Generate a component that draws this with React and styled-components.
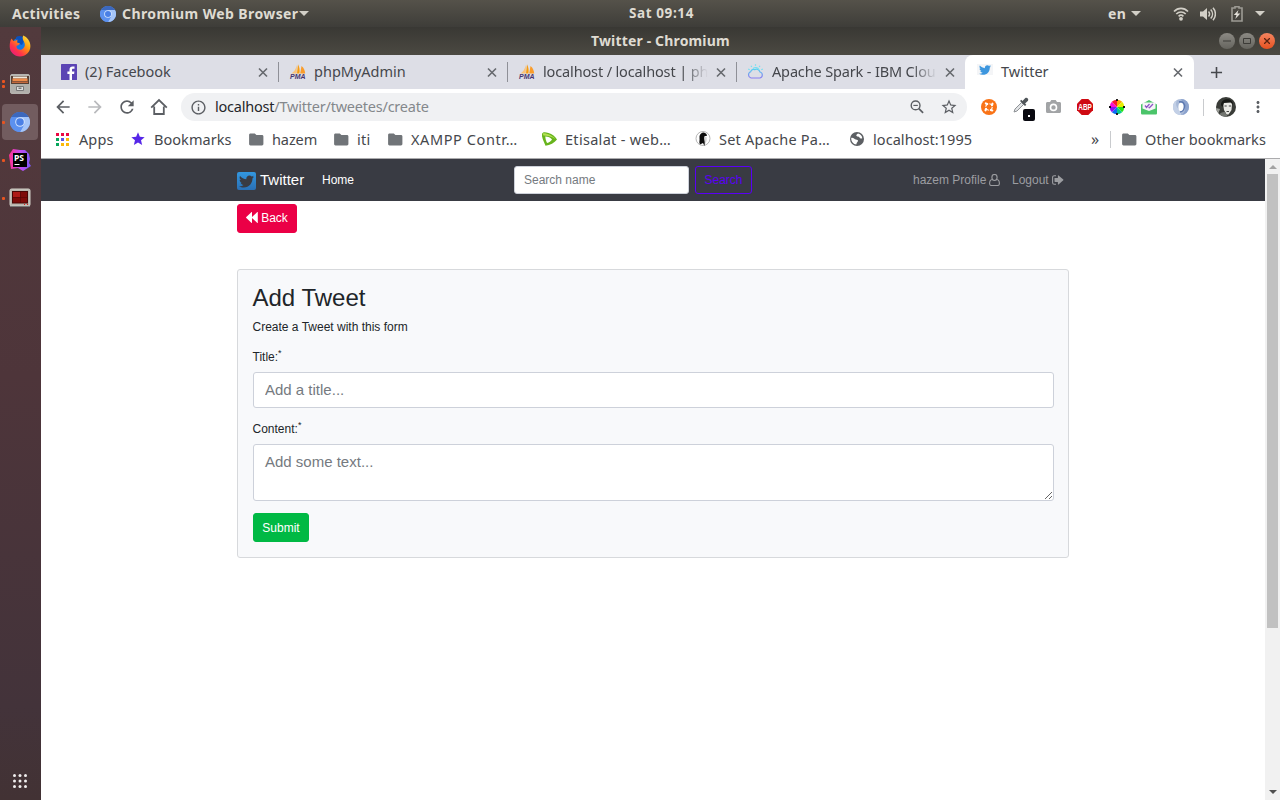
import React from "react";
import styled, { createGlobalStyle } from "styled-components";
import {
  MdArrowBack, MdArrowForward, MdRefresh, MdInfoOutline, MdStarBorder,
  MdMoreVert, MdAdd, MdStar,
} from "react-icons/md";
import { FaTwitter } from "react-icons/fa";

const Global = createGlobalStyle`
  * { box-sizing: border-box; }
  html, body { margin: 0; padding: 0; overflow: hidden; background: #fff; }
`;

const Screen = styled.div`
  display: flex;
  flex-direction: column;
  width: 1280px;
  height: 800px;
  overflow: hidden;
  font-family: "Noto Sans", "Open Sans", sans-serif;
`;

/* ---------- desktop shell ---------- */

const TopBar = styled.header`
  display: flex;
  align-items: center;
  height: 27px;
  flex: none;
  background: linear-gradient(#55524a, #3e3d39);
  color: #dfdbd2;
`;

const Label = styled.span`
  flex: none;
  width: ${(p) => (p.$w ? p.$w + "px" : "auto")};
  margin-left: ${(p) => p.$ml || 0}px;
  padding-bottom: ${(p) => p.$lift || 0}px;
  font-size: ${(p) => p.$size || 14.5}px;
  font-weight: ${(p) => (p.$bold ? 700 : 400)};
  letter-spacing: ${(p) => p.$ls || 0}px;
  line-height: 20px;
  white-space: nowrap;
`;

const Slot = styled.span`
  display: flex;
  flex: none;
  align-items: center;
  justify-content: center;
  width: ${(p) => p.$w}px;
  height: ${(p) => p.$h || p.$w}px;
  margin-left: ${(p) => p.$ml || 0}px;
  color: ${(p) => p.$color || "inherit"};
  svg { display: block; flex: none; }
`;

const Desktop = styled.div`
  display: flex;
  flex: 1;
  min-height: 0;
`;

const Dock = styled.nav`
  display: flex;
  flex-direction: column;
  width: 41px;
  flex: none;
  background: linear-gradient(#523a3d, #4e353a 45%, #43333a 88%, #423234);
`;

const DockItem = styled.div`
  display: flex;
  align-items: center;
  width: 40px;
  height: 38px;
`;

const Dots = styled.div`
  display: flex;
  flex-direction: column;
  gap: 2px;
  width: 5px;
  margin-right: -5px;
  padding-left: 2px;
  z-index: 1;
  i { width: 3px; height: 3px; border-radius: 1px; background: #e95420; flex: none; }
`;

const DockTile = styled.div`
  display: flex;
  align-items: center;
  justify-content: center;
  width: 36px;
  height: 36px;
  margin-left: 2px;
  border-radius: 4px;
  background: ${(p) => (p.$active ? "#725c5f" : "transparent")};
`;

const AppsButton = styled.div`
  margin: auto 0 10px 12px;
  height: 16px;
  svg { display: block; }
`;

const Window = styled.main`
  display: flex;
  flex-direction: column;
  width: 1239px;
`;

const TitleBar = styled.div`
  display: flex;
  align-items: center;
  height: 28px;
  flex: none;
  background: linear-gradient(#393834, #4b4942);
  color: #dfdbd2;
`;

const WindowButton = styled.span`
  display: flex;
  align-items: center;
  justify-content: center;
  width: 16px;
  height: 16px;
  margin-left: ${(p) => p.$ml}px;
  border-radius: 50%;
  background: ${(p) => (p.$close ? "linear-gradient(#f58560, #e65120)" : "linear-gradient(#8c8a84, #65645e)")};
`;

/* ---------- browser chrome ---------- */

const TabStrip = styled.div`
  display: flex;
  height: 34px;
  flex: none;
  background: #dddee6;
  color: #45474c;
`;

const Tab = styled.div`
  display: flex;
  align-items: center;
  width: ${(p) => p.$w}px;
  padding-left: ${(p) => p.$pl}px;
  flex: none;
  background: ${(p) => (p.$active ? "#fff" : "transparent")};
  border-radius: ${(p) => (p.$active ? "8px 8px 0 0" : 0)};
`;

const TabTitle = styled(Label)`
  margin-left: 8px;
  padding-bottom: 2px;
  ${(p) => p.$fade && "mask-image: linear-gradient(90deg, #000 85%, transparent);"}
`;

const TabDivider = styled.i`
  width: 1px;
  height: 20px;
  margin-top: 7px;
  background: #8f9097;
`;

const Toolbar = styled.div`
  display: flex;
  align-items: center;
  height: 36px;
  flex: none;
  color: #5b5e63;
  padding-left: 12px;
`;

const AddressBar = styled.div`
  display: flex;
  align-items: center;
  width: 786px;
  height: 28px;
  margin-left: 12px;
  border-radius: 14px;
  background: #f0f1f3;
  em { font-style: normal; color: #84888c; }
  b { font-weight: 400; color: #25262a; }
`;

const BookmarksBar = styled.div`
  display: flex;
  align-items: center;
  height: 34px;
  flex: none;
  border-bottom: 1px solid #ababad;
  color: #45474c;
  padding-bottom: 5px;
`;

const Rule = styled.i`
  flex: none;
  width: 1px;
  height: 17px;
  margin-left: ${(p) => p.$ml}px;
  background: #c9cbce;
`;

const Badge = styled.span`
  position: relative;
  display: flex;
  margin-left: 16px;
  width: 20px;
  height: 20px;
  > svg + svg { position: absolute; left: 10px; top: 12px; }
`;

/* ---------- page ---------- */

const Viewport = styled.div`
  display: flex;
  flex: 1;
  min-height: 0;
`;

const Page = styled.div`
  width: 1224px;
  background: #fff;
  color: #212529;
  font: 12px/18px "Liberation Sans", Arial, sans-serif;
`;

const Nav = styled.div`
  display: flex;
  align-items: center;
  height: 42px;
  padding-left: 196px;
  background: #393b43;
  color: #fff;
`;

const Brand = styled.span`
  display: flex;
  align-items: center;
  gap: 4px;
  width: 85px;
  font-size: 15px;
`;

const BrandLogo = styled.i`
  display: flex;
  align-items: center;
  justify-content: center;
  width: 19px;
  height: 18px;
  margin-top: 2px;
  border-radius: 2px;
  background: linear-gradient(#3397df, #2a70b6);
  color: #393b43;
`;

const NavLink = styled.span`
  display: flex;
  align-items: center;
  gap: 3px;
  width: ${(p) => p.$w}px;
  color: ${(p) => (p.$active ? "#fff" : "#9c9da1")};
  white-space: nowrap;
`;

const Field = styled.input`
  display: block;
  width: 100%;
  height: 36px;
  padding: 0 11px 2px;
  border: 1px solid #cdd1da;
  border-radius: 3px;
  outline: none;
  background: #fff;
  font: 15px/22px "Liberation Sans", Arial, sans-serif;
  &::placeholder { color: #757a80; opacity: 1; }
`;

const SearchField = styled(Field)`
  width: 175px;
  height: 28px;
  padding: 0 9px;
  font-size: 12px;
`;

const TextArea = styled(Field)`
  height: 57px;
  padding: 6px 11px;
  resize: vertical;
`;

const Button = styled.button`
  display: flex;
  align-items: center;
  justify-content: center;
  gap: 3px;
  width: ${(p) => p.$w}px;
  height: 29px;
  padding: 0 0 ${(p) => p.$lift || 0}px;
  border: 1px solid ${(p) => p.$line || p.$bg};
  border-radius: 3px;
  background: ${(p) => p.$bg};
  color: ${(p) => p.$line || "#fff"};
  font: 12px/18px "Liberation Sans", Arial, sans-serif;
`;

const SearchButton = styled(Button)`
  height: 28px;
  margin: 0 161px 0 6px;
`;

const Content = styled.div`
  width: 832px;
  margin: 3px 0 0 196px;
`;

const Card = styled.form`
  height: 289px;
  margin-top: 36px;
  padding: 13px 14px 0 15px;
  border: 1px solid #d7d9dc;
  border-radius: 3px;
  background: #f8f9fb;
`;

const Heading = styled.h3`
  margin: 0 0 6px -0.5px;
  font-size: 24px;
  line-height: 29px;
  font-weight: 400;
`;

const Intro = styled.p`
  margin: 0 0 12px -0.5px;
`;

const FieldLabel = styled.label`
  display: block;
  height: 18px;
  margin: 0 0 6px -0.5px;
  sup { font-size: 9px; line-height: 0; vertical-align: 5px; }
`;

const Group = styled.div`
  margin-bottom: 12px;
`;

const Scrollbar = styled.div`
  display: flex;
  flex-direction: column;
  align-items: center;
  width: 15px;
  background: #f1f1f1;
`;

const Thumb = styled.i`
  width: 11px;
  height: 454px;
  background: #c1c1c1;
`;

const Arrow = styled.i`
  width: 0;
  height: 0;
  border: 4px solid transparent;
  ${(p) =>
    p.$down
      ? "border-top-color: #505050; border-bottom: 0; margin: auto 0 6px;"
      : "border-bottom-color: #a3a3a3; border-top: 0; margin: 6px 0 5px;"}
`;

/* ---------- icons ---------- */

const Caret = () => (
  <svg width="10" height="5" viewBox="0 0 10 5"><path d="M0 0h10L5 5z" fill="#d2cfc7" /></svg>
);

const Close = () => (
  <svg width="15" height="15" viewBox="0 0 15 15"><path d="m4 3.500 8 8M12 3.500l-8 8" stroke="#66696e" strokeWidth="1.600" /></svg>
);

const Folder = () => (
  <svg width="15" height="13" viewBox="0 0 15 13">
    <path d="M1.500.5h4.300l1.600 1.600H13c.8 0 1.400.6 1.400 1.400v7.600c0 .8-.6 1.400-1.400 1.400H1.500C.7 12.500.1 11.900.1 11.100V1.900C.1 1.100.7.5 1.500.5z" fill="#707478" />
  </svg>
);

const ZoomOut = () => (
  <svg width="14" height="14" viewBox="0 0 15 15" fill="none" stroke="#5b5e63">
    <circle cx="6" cy="5.800" r="4.700" strokeWidth="1.500" />
    <path d="M9.500 9.300 14 13.800" strokeWidth="1.800" /><path d="M3.600 5.800h4.800" strokeWidth="1.200" />
  </svg>
);

const Globe = () => (
  <svg width="14" height="14" viewBox="0 0 14 14">
    <circle cx="7" cy="7" r="7" fill="#5c5f63" />
    <path d="M1.200 6C3 5.500 4 6.500 5 7.200s2.600.2 3 1.400-1.500 1.600-1.700 3.900C3.500 12.300 1 9.500 1.200 6zM8 1.500C6.500 2.500 5.500 3.500 7 4.300s2 .2 2.500 1.300 1.500 1 2.800.6C12 3.500 10 1.700 8 1.500z" fill="#fff" />
  </svg>
);

const Chromium = ({ size }) => (
  <svg width={size} height={size} viewBox="0 0 20 20">
    <circle cx="10" cy="10" r="10" fill="#5a90ee" />
    <path d="M1.300 5A10 10 0 0 1 18.700 5H10z" fill="#3c68bd" />
    <path d="M18.700 5A10 10 0 0 1 10 20l4.400-8L10 5z" fill="#a5c5f8" />
    <path d="M1.300 5A10 10 0 0 0 10 20l3.500-6-8-2z" fill="#5c91ef" />
    <circle cx="10" cy="10" r="4.800" fill="#d3e3fc" />
    <circle cx="10" cy="10" r="3.800" fill="#4a80e6" />
  </svg>
);

const Firefox = () => (
  <svg width="22" height="22" viewBox="0 0 22 22">
    <defs>
      <linearGradient id="ff" x1="1" y1="0" x2="0.1" y2="1">
        <stop offset="0" stopColor="#fff44f" /><stop offset="0.4" stopColor="#ff980e" />
        <stop offset="0.7" stopColor="#ff3647" /><stop offset="1" stopColor="#e31587" />
      </linearGradient>
    </defs>
    <circle cx="11" cy="10.500" r="8" fill="#1476e6" />
    <path d="M7 2c3-2 7-1 9 2l-3 6-5-2z" fill="#0a50bd" />
    <path d="M2.500 3.500 4.400 6 7 5.400l1.500-1-.4 3 3 1.200-1.800 1.600-1.700.6c-.8 4 4.500 5 6.500 2.600 2-2 2.200-4 1-6.500C14 5 13 3 14.200.5 18 2 21.500 6 21.400 11c0 6-4.800 10.500-10.400 10.500S.7 17 .7 11.500c0-3 .4-6 1.800-8z" fill="url(#ff)" />
  </svg>
);

const Files = () => (
  <svg width="20" height="20" viewBox="0 0 20 20">
    <rect x=".5" y=".5" width="19" height="19" rx="1.500" fill="#b7b5b0" stroke="#b5b4b0" />
    <rect x="1" y="2" width="18" height="8" fill="#574034" />
    <path d="M3 2.500h14v2H3z" fill="#eee8dc" /><path d="M2.500 4.500h15v2.500h-15z" fill="#ee8c4b" /><path d="M2 7.500h16v1.500H2z" fill="#c2683e" />
    <path d="M1 10h18v8.500H1z" fill="#b0afab" />
    <path d="M6.500 12.500h7v4h-7z" fill="#ddd" stroke="#777" /><path d="M8.500 13.500h3V15h-3z" fill="#777" />
  </svg>
);

const PhpStorm = () => (
  <svg width="22" height="22" viewBox="0 0 22 22">
    <defs><linearGradient id="ps"><stop offset="0" stopColor="#ff318c" /><stop offset=".5" stopColor="#c64bf5" /><stop offset="1" stopColor="#765af8" /></linearGradient></defs>
    <path d="M0 6 4 0l7 1 5 0 4 4 1 5-1 4 2 3-8 5-5-3-7 1z" fill="url(#ps)" />
    <path d="M4 4h14v14H4z" fill="#000" />
    <text x="5" y="12" fontFamily="Noto Sans" fontWeight="700" fontSize="8.500" fill="#fff">PS</text>
    <path d="M5.500 15h5v1h-5z" fill="#fff" />
  </svg>
);

const Terminator = () => (
  <svg width="22" height="20" viewBox="0 0 22 20">
    <rect x="1" y="1" width="20" height="17" rx="1.500" fill="#b8b6ae" stroke="#d2d0c8" />
    <path d="M3 3h16v12.500H3z" fill="#4a0705" /><path d="M4 4h7v5H4z" fill="#ae1b17" /><path d="M11.500 4h6.500v5h-6.500zM4 9.500h7v5H4zM11.500 9.500h6.500v5h-6.500z" fill="#7e0b09" />
    <path d="M15 16.500h1M18 16.500h1" stroke="#d22" /><path d="M1 18.500h20" stroke="#777" />
  </svg>
);

const AppGrid = () => (
  <svg width="16" height="16" viewBox="0 0 16 16" fill="#f0eeee">
    {[1.5, 7, 12.5].map((y) => [2.5, 8, 13.5].map((x) => <circle key={x + "-" + y} cx={x} cy={y} r="1.500" />))}
  </svg>
);

const Wifi = () => (
  <svg width="16" height="14" viewBox="0 0 16 14" fill="none" stroke="#d2cfc7" strokeWidth="1.700">
    <path d="M1 4.500C5 .3 11 .3 15 4.500M3.300 7c2.700-2.700 6.700-2.700 9.400 0M5.600 9.300c1.400-1.300 3.400-1.300 4.800 0" />
    <circle cx="8" cy="11.800" r="1.900" fill="#d2cfc7" stroke="none" />
  </svg>
);

const Volume = () => (
  <svg width="16" height="14" viewBox="0 0 16 14" fill="none" stroke="#d2cfc7" strokeWidth="1.500">
    <path d="M0 4.500h3L7 1v12L3 9.500H0z" fill="#d2cfc7" stroke="none" />
    <path d="M8.500 4.500c1.300 1.500 1.300 3.500 0 5M10.700 2.500c2.400 2.600 2.400 6.400 0 9M13 .7c3.200 3.600 3.200 9 0 12.600" />
  </svg>
);

const Battery = () => (
  <svg width="12" height="16" viewBox="0 0 12 16">
    <path d="M4 2V.8h4V2h3v13H1V2z" fill="none" stroke="#9d9b94" strokeWidth="1.600" />
    <path d="M7.500 4 2.800 9h2.700L4.300 13l5-5.500H6.400z" fill="#e4e1da" />
  </svg>
);

const Facebook = () => (
  <svg width="16" height="16" viewBox="0 0 16 16">
    <rect width="16" height="16" rx=".6" fill="#5b44b4" />
    <path d="M11 16V9.900h2.100l.3-2.400H11V6c0-.7.200-1.200 1.200-1.200h1.300V2.600c-.3 0-1-.1-1.900-.1-1.900 0-3.100 1.100-3.100 3.200v1.800H6.400v2.400h2.100V16z" fill="#fff" />
  </svg>
);

const Pma = () => (
  <svg width="16" height="16" viewBox="0 0 16 16" overflow="visible">
    <path d="M6.800 1v8.500H1.500C4 8 6 5 6.800 1z" fill="#fbc37a" />
    <path d="M8 .3c1.500 3 2 6 1.400 9.200H7z" fill="#f89c0e" />
    <path d="M11.500 2c2.500 2 3.500 4.700 3.700 7.500h-5z" fill="#fa9c2a" />
    <text x="0" y="15.200" textLength="15.500" lengthAdjust="spacingAndGlyphs" fontSize="6.500" fontWeight="700" fontStyle="italic" fontFamily="Liberation Sans" fill="#47356f">PMA</text>
  </svg>
);

const CloudSun = () => (
  <svg width="17" height="16" viewBox="0 0 17 16" fill="none" strokeWidth="1.200">
    <defs><linearGradient id="cs" x2="0" y2="1"><stop offset="0" stopColor="#5bd0ef" /><stop offset="1" stopColor="#8a7bf0" /></linearGradient></defs>
    <path d="M4 14a3.300 3.300 0 0 1-.3-6.300c.6-2.200 2.300-2.700 4-2.100C9.300 4.800 12 5 13 8a3.100 3.100 0 0 1 0 6z" stroke="url(#cs)" />
    <path d="M6 4.700a3.600 3.600 0 0 1 6 1M8.500.3v1.500M4 1.700l.8 1.300M13 1.700l-.8 1.300M1.200 5l1.500.7M15.800 5l-1.500.7" stroke="#74dff2" />
  </svg>
);

const Home = () => (
  <svg width="18" height="18" viewBox="0 0 18 18" fill="none" stroke="#5b5e63" strokeWidth="1.800">
    <path d="M1.200 9.700 9 2l7.800 7.700M4.200 8.500V16h9.600V8.500" />
  </svg>
);

const AppsIcon = () => {
  const colors = ["#eb0843", "#eb0843", "#eb0843", "#06a55b", "#5a55e6", "#fbb90a", "#06a55b", "#fbb90a", "#fbb90a"];
  return (
    <svg width="13" height="13" viewBox="0 0 13 13">
      {colors.map((c, i) => <rect key={i} x={(i % 3) * 5} y={Math.floor(i / 3) * 5} width="3" height="3" fill={c} />)}
    </svg>
  );
};

const Etisalat = () => (
  <svg width="17" height="16" viewBox="0 0 17 16">
    <path d="M1 3C1.500.8 4 .8 7.500 2S14.500 5.500 16 8.500c-2.500 3.500-7 5.500-11.500 6.300C2.500 10 .5 6 1 3z" fill="#67b41d" />
    <path d="M1.500 2.500C4 1.500 11 4 14.500 8 10 5 6 4.500 2.500 4.500z" fill="#b3e052" />
    <path d="M4.300 5.500c3 0 5.200 1 6.700 3-1.300 2-2.700 3-4.900 3.600C5 9.800 4.300 7.500 4.300 5.500z" fill="#fff" />
  </svg>
);

const Penguin = () => (
  <svg width="16" height="16" viewBox="0 0 16 16">
    <circle cx="8" cy="7.500" r="7" fill="#fff" stroke="#a3a3a3" strokeWidth=".8" />
    <path d="M4.500 5C5.500 2 8 .8 10.500 2.200c1.500 1 1.800 2.600 1 2.900L9.800 5c-1.500 2 .7 5-.3 10L8 12l-3 1.500C3.500 11 5 9 4.500 7.500z" fill="#0d0d0d" />
    <path d="M9.800 5.500 11.500 6c.5 2 .2 4-.8 6L10 14c.7-3-.9-6-.2-8.500z" fill="#d5d5d5" />
  </svg>
);

const Share = () => (
  <svg width="16" height="16" viewBox="0 0 16 16">
    <circle cx="8" cy="8" r="8" fill="#f97317" />
    <g fill="none" stroke="#fff" strokeWidth="2.100" strokeLinecap="round">
      <path d="m4.800 4.400 1.500.5M11.500 4.700l-.5 1.500M11.300 11.500l-1.500-.5M4.500 11.300l.5-1.500" />
    </g>
    <circle cx="8" cy="8" r="3.300" fill="none" stroke="#fff" strokeWidth="1.100" strokeDasharray="3.700 1.500" />
  </svg>
);

const Dropper = () => (
  <Badge>
    <svg width="16" height="16" viewBox="0 0 16 16">
      <path d="m1 15 1-3 6.500-6.500 2 2L4 14z" fill="#e2e4e6" stroke="#8e9296" />
      <path d="m7 4 5 5 1.300-1.300-1.200-1.200L15 3.700C16 2 14 0 12.300 1L9.500 3.900 8.300 2.700z" fill="#50565a" />
    </svg>
    <svg width="12" height="12" viewBox="0 0 12 12"><rect width="12" height="12" rx="2" fill="#090910" /><path d="M5 6h2v2H5z" fill="#fff" /></svg>
  </Badge>
);

const Camera = () => (
  <svg width="15" height="14" viewBox="0 0 15 14">
    <path d="M1.500 2H4l1.300-2h4.400L11 2h2.500c.9 0 1.500.7 1.500 1.500v8c0 .9-.6 1.500-1.500 1.500h-12A1.500 1.500 0 0 1 0 11.500v-8C0 2.700.6 2 1.500 2z" fill="#a2a4a6" />
    <circle cx="7.500" cy="7.400" r="3" fill="none" stroke="#fff" strokeWidth="1.600" />
  </svg>
);

const Abp = () => (
  <svg width="16" height="16" viewBox="0 0 16 16" overflow="visible">
    <path d="M4.700 0h6.600L16 4.700v6.600L11.300 16H4.700L0 11.300V4.700z" fill="#cf0a12" />
    <text x="1.300" y="10.900" textLength="13.500" lengthAdjust="spacingAndGlyphs" fontFamily="Liberation Sans" fontWeight="700" fontSize="8.300" fill="#fff">ABP</text>
  </svg>
);

const Wheel = () => {
  const cs = ["#ffa600", "#e6ef00", "#24e412", "#0ac98c", "#0d6df2", "#8810f2", "#f90fd0", "#fb1530"];
  const pt = (a) => `${8 + 7.3 * Math.cos(a)} ${8 + 7.3 * Math.sin(a)}`;
  return (
    <svg width="16" height="16" viewBox="0 0 16 16">
      {cs.map((c, i) => <path key={c} fill={c} d={`M8 8L${pt((i * Math.PI) / 4 - 1.57)}A7.3 7.3 0 0 1 ${pt(((i + 1) * Math.PI) / 4 - 1.57)}z`} />)}
      <path d="M8 0v2M8 14v2M0 8h2M14 8h2" stroke="#111" strokeWidth="1.800" />
    </svg>
  );
};

const Mail = () => (
  <svg width="16" height="15" viewBox="0 0 16 15">
    <path d="M0 4.500 8 0l8 4.500V13c0 1-.5 1.500-1.500 1.500h-13C.5 14.500 0 14 0 13z" fill="#4bc46a" />
    <path d="M1.500 2.500h13v6L8 11 1.500 8.500z" fill="#f5f5f7" />
    <path d="m4 5.500 1.500 2L8.500 4M7.500 7.300l1 .5L12 4" fill="none" stroke="#8e56c7" strokeWidth="1.300" />
  </svg>
);

const Swirl = () => (
  <svg width="16" height="16" viewBox="0 0 16 16">
    <circle cx="8" cy="8" r="8" fill="#a9bad8" />
    <path d="M8 0a8 8 0 0 1 0 16c4-2 5-6 3-10z" fill="#8ba2cd" />
    <path d="M8 16A8 8 0 0 1 4 1c-2 4-1 8 4 11z" fill="#c3d0e6" />
    <ellipse cx="8" cy="8" rx="2.600" ry="4.300" fill="#fff" />
    <path d="M6 3c4-1 6 2 5.500 5S9 12.800 7 13" fill="none" stroke="#5d79b0" strokeWidth="1.400" />
  </svg>
);

const Avatar = () => (
  <svg width="20" height="20" viewBox="0 0 20 20">
    <defs><clipPath id="av"><circle cx="10" cy="10" r="10" /></clipPath></defs>
    <g clipPath="url(#av)">
      <path d="M0 0h20v20H0z" fill="#3a3c38" />
      <path d="M7 6c1-2 8-2 9 1l-.500 6-3 4.500h-2L8 13z" fill="#e9e9e4" />
      <path d="M5 8c0-7 12-8 12 0l-2-2.500L8 6l-1.500 4z" fill="#171916" />
      <path d="M8.500 9h2.200M12.800 9H15M10.500 14.500h2.500" stroke="#444" strokeWidth="1.100" />
      <path d="M2 20c1-4 4-5 7-5l3 5z" fill="#737671" /><path d="m0 11 4 1-2 5z" fill="#9a9d97" />
    </g>
  </svg>
);

const Backward = () => (
  <svg width="12" height="11" viewBox="0 0 12 11"><path d="M6 .2v4.900L11.300.1c.3-.2.500-.1.500.2v10.400c0 .3-.2.400-.5.200L6 5.900v4.900c0 .3-.2.400-.4.200L.3 5.900a.5.500 0 0 1 0-.8L5.600 0c.2-.2.4-.1.4.2z" fill="#fff" /></svg>
);

const UserO = () => (
  <svg width="11" height="12" viewBox="0 0 11 12" fill="none" stroke="currentColor" strokeWidth="1.100">
    <ellipse cx="5.500" cy="3.500" rx="2.600" ry="3" />
    <path d="M3.200 5.500C1.400 5.700.6 7.500.6 9.400c0 1.300.8 2.100 1.800 2.100h6.200c1 0 1.800-.8 1.800-2.100 0-1.900-.8-3.700-2.600-3.900" />
  </svg>
);

const SignOut = () => (
  <svg width="12" height="10" viewBox="0 0 12 10">
    <path d="M4 .7H2.200C1.300.7.600 1.300.600 2.200v5.600c0 .9.700 1.500 1.600 1.500H4" fill="none" stroke="currentColor" strokeWidth="1.100" />
    <path d="M6.500.4 11.300 4.600c.2.200.2.500 0 .7L6.500 9.600c-.3.200-.6.100-.6-.3V7H3c-.3 0-.5-.2-.5-.4V3.400c0-.2.200-.4.500-.4h2.900V.7c0-.4.300-.5.600-.3z" fill="currentColor" />
  </svg>
);

const Favicon = styled.span`
  display: flex;
  justify-content: center;
  width: 16px;
  height: 11px;
  margin-bottom: 5px;
  background: #f4f5f7;
  color: #3c96de;
  svg { flex: none; }
`;

export default function App() {
  return (
    <Screen>
      <Global />
      <TopBar>
        <Label $ml={12} $w={88} $size={14} $bold $ls={0.33}>Activities</Label>
        <Slot $w={16}><Chromium size={16} /></Slot>
        <Label $ml={6} $w={177} $size={14} $bold $ls={0.4}>Chromium Web Browser</Label>
        <Slot $w={10}><Caret /></Slot>
        <Label $ml={320} $w={479} $size={13.5} $bold $ls={0.6} $lift={2}>Sat 09:14</Label>
        <Label $w={23} $size={14} $bold $ls={0.3}>en</Label>
        <Slot $w={10}><Caret /></Slot>
        <Slot $w={16} $ml={32}><Wifi /></Slot>
        <Slot $w={16} $ml={11}><Volume /></Slot>
        <Slot $w={12} $h={16} $ml={15}><Battery /></Slot>
        <Slot $w={10} $ml={12}><Caret /></Slot>
      </TopBar>
      <Desktop>
        <Dock>
          <DockItem><Dots /><DockTile><Firefox /></DockTile></DockItem>
          <DockItem><Dots><i /><i /></Dots><DockTile><Files /></DockTile></DockItem>
          <DockItem><Dots><i /></Dots><DockTile $active><Chromium size={20} /></DockTile></DockItem>
          <DockItem><Dots><i /></Dots><DockTile><PhpStorm /></DockTile></DockItem>
          <DockItem><Dots><i /></Dots><DockTile><Terminator /></DockTile></DockItem>
          <AppsButton><AppGrid /></AppsButton>
        </Dock>
        <Window>
          <TitleBar>
            <Label $ml={550} $w={628} $size={14} $bold $ls={0.16}>Twitter - Chromium</Label>
            <WindowButton $ml={0}><svg width="8" height="8"><path d="M0 4h8" stroke="#3c3b37" /></svg></WindowButton>
            <WindowButton $ml={4}><svg width="8" height="6"><path d="M.5.500h7v5h-7z" fill="none" stroke="#3c3b37" /></svg></WindowButton>
            <WindowButton $ml={4} $close><svg width="6" height="6"><path d="m0 0 6 6M6 0 0 6" stroke="#5b2310" strokeWidth="1.300" /></svg></WindowButton>
          </TitleBar>
          <TabStrip>
            <Tab $w={237} $pl={20}><Facebook /><TabTitle $w={170}>(2) Facebook</TabTitle><Close /></Tab>
            <TabDivider />
            <Tab $w={228} $pl={11}><Pma /><TabTitle $w={170}>phpMyAdmin</TabTitle><Close /></Tab>
            <TabDivider />
            <Tab $w={228} $pl={11}><Pma /><TabTitle $w={165} $ls={-0.14} $fade>localhost / localhost | ph</TabTitle><Slot $w={15} $ml={5}><Close /></Slot></Tab>
            <TabDivider />
            <Tab $w={228} $pl={10}><CloudSun /><TabTitle $w={165} $ls={-0.15} $fade>Apache Spark - IBM Clou</TabTitle><Slot $w={15} $ml={5}><Close /></Slot></Tab>
            <Tab $w={229} $pl={12} $active><Favicon><FaTwitter size={12} /></Favicon><TabTitle $w={169}>Twitter</TabTitle><Close /></Tab>
            <Slot $w={20} $h={34} $ml={12}><MdAdd size={19} /></Slot>
          </TabStrip>
          <Toolbar>
            <Slot $w={20}><MdArrowBack size={20} /></Slot>
            <Slot $w={20} $ml={12} $color="#b9babd"><MdArrowForward size={20} /></Slot>
            <Slot $w={20} $ml={12}><MdRefresh size={20} /></Slot>
            <Slot $w={20} $ml={12}><Home /></Slot>
            <AddressBar>
              <Slot $w={17} $ml={9}><MdInfoOutline size={17} /></Slot>
              <Label $ml={8} $w={694} $ls={-0.22} $lift={2}><b>localhost</b><em>/Twitter/tweetes/create</em></Label>
              <Slot $w={16}><ZoomOut /></Slot>
              <Slot $w={18} $ml={15}><MdStarBorder size={18} /></Slot>
            </AddressBar>
            <Slot $w={16} $ml={14}><Share /></Slot>
            <Dropper />
            <Slot $w={16} $ml={12}><Camera /></Slot>
            <Slot $w={16} $ml={16}><Abp /></Slot>
            <Slot $w={16} $ml={16}><Wheel /></Slot>
            <Slot $w={16} $ml={16}><Mail /></Slot>
            <Slot $w={16} $ml={16}><Swirl /></Slot>
            <Rule $ml={14} />
            <Slot $w={20} $ml={12}><Avatar /></Slot>
            <Slot $w={18} $ml={13}><MdMoreVert size={18} /></Slot>
          </Toolbar>
          <BookmarksBar>
            <Slot $w={13} $ml={15}><AppsIcon /></Slot>
            <Label $ml={10} $w={51} $ls={0.1}>Apps</Label>
            <Slot $w={15} $color="#5627e8"><MdStar size={16} /></Slot>
            <Label $ml={9} $w={94} $ls={0.05}>Bookmarks</Label>
            <Slot $w={17}><Folder /></Slot>
            <Label $ml={7} $w={61} $ls={-0.1}>hazem</Label>
            <Slot $w={17}><Folder /></Slot>
            <Label $ml={7} $w={30} $ls={0.3}>iti</Label>
            <Slot $w={17}><Folder /></Slot>
            <Label $ml={7} $w={130} $ls={0.6}>XAMPP Contr…</Label>
            <Slot $w={17}><Etisalat /></Slot>
            <Label $ml={7} $w={130} $ls={0.3}>Etisalat - web…</Label>
            <Slot $w={16}><Penguin /></Slot>
            <Label $ml={8} $w={130} $ls={0.23}>Set Apache Pa…</Label>
            <Slot $w={16}><Globe /></Slot>
            <Label $ml={8} $w={218} $ls={0.06}>localhost:1995</Label>
            <Label $w={14} $size={16}>»</Label>
            <Rule $ml={5} />
            <Slot $w={17} $ml={10}><Folder /></Slot>
            <Label $ml={7} $ls={0.06}>Other bookmarks</Label>
          </BookmarksBar>
          <Viewport>
            <Page>
              <Nav>
                <Brand><BrandLogo><FaTwitter size={15} /></BrandLogo>Twitter</Brand>
                <NavLink $w={192} $active>Home</NavLink>
                <SearchField placeholder="Search name" />
                <SearchButton $w={57} $bg="transparent" $line="#5a00f5">Search</SearchButton>
                <NavLink $w={99}>hazem Profile <UserO /></NavLink>
                <NavLink $w={60}>Logout <SignOut /></NavLink>
              </Nav>
              <Content>
                <Button $w={60} $bg="#eb0046" $lift={2}><Backward />Back</Button>
                <Card>
                  <Heading>Add Tweet</Heading>
                  <Intro>Create a Tweet with this form</Intro>
                  <Group>
                    <FieldLabel>Title:<sup>*</sup></FieldLabel>
                    <Field placeholder="Add a title..." />
                  </Group>
                  <Group>
                    <FieldLabel>Content:<sup>*</sup></FieldLabel>
                    <TextArea as="textarea" placeholder="Add some text..." />
                  </Group>
                  <Button type="button" $w={56} $bg="#00b944">Submit</Button>
                </Card>
              </Content>
            </Page>
            <Scrollbar><Arrow /><Thumb /><Arrow $down /></Scrollbar>
          </Viewport>
        </Window>
      </Desktop>
    </Screen>
  );
}
